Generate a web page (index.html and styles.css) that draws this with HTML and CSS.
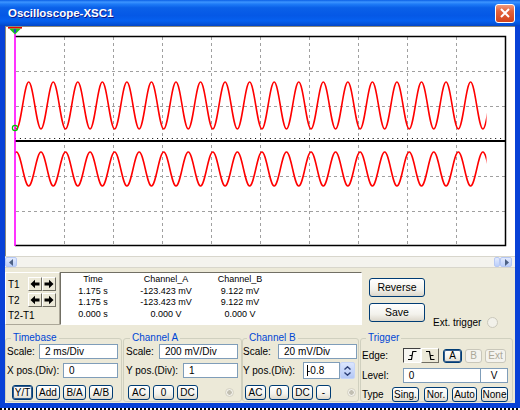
FILE: index.html
```html
<!DOCTYPE html>
<html lang="en">

<head>
    <meta charset="UTF-8">
    <title>Oscilloscope-XSC1</title>
    <link rel="stylesheet" href="styles.css">
</head>

<body>
    <div class="window">
        <div class="titlebar">
            <span class="title">Oscilloscope-XSC1</span>
            <button class="close">
                <svg width="10" height="10" viewBox="0 0 10 10"><path d="M1 1L9 9M9 1L1 9" stroke="#fff" stroke-width="2"/></svg>
            </button>
        </div>
        <div class="client">
            <div class="screen">
                <svg width="509" height="229" viewBox="0 0 509 229">
                    <defs>
                        <clipPath id="clip"><rect x="9" y="0" width="471.5" height="229"/></clipPath>
                    </defs>
                    <!-- grid -->
                    <g stroke="#a0a0a0" stroke-width="1" stroke-dasharray="3 3">
                        <path d="M58.5 10V219M107.5 10V219M156.5 10V219M205.5 10V219M254.5 10V219M303.5 10V219M352.5 10V219M401.5 10V219M450.5 10V219"/>
                        <path d="M10 44.5H500M10 79.5H500M10 149.5H500M10 184.5H500"/>
                    </g>
                    <line x1="9" y1="114" x2="500" y2="114" stroke="#000" stroke-width="2"/>
                    <line x1="9" y1="111.5" x2="500" y2="111.5" stroke="#000" stroke-width="1" stroke-dasharray="1 3.9"/>
                    <path d="M9 9.5H499.5V218.5H9" fill="none" stroke="#000" stroke-width="1.5"/>
                    <!-- channel A / B -->
                    <g clip-path="url(#clip)" fill="none" stroke="#f00" stroke-width="1.6">
                        <path d="M-1.85 55c4.47 0 7.805 47 12.275 47s7.805 -47 12.275 -47s7.805 47 12.275 47s7.805 -47 12.275 -47s7.805 47 12.275 47s7.805 -47 12.275 -47s7.805 47 12.275 47s7.805 -47 12.275 -47s7.805 47 12.275 47s7.805 -47 12.275 -47s7.805 47 12.275 47s7.805 -47 12.275 -47s7.805 47 12.275 47s7.805 -47 12.275 -47s7.805 47 12.275 47s7.805 -47 12.275 -47s7.805 47 12.275 47s7.805 -47 12.275 -47s7.805 47 12.275 47s7.805 -47 12.275 -47s7.805 47 12.275 47s7.805 -47 12.275 -47s7.805 47 12.275 47s7.805 -47 12.275 -47s7.805 47 12.275 47s7.805 -47 12.275 -47s7.805 47 12.275 47s7.805 -47 12.275 -47s7.805 47 12.275 47s7.805 -47 12.275 -47s7.805 47 12.275 47s7.805 -47 12.275 -47s7.805 47 12.275 47s7.805 -47 12.275 -47s7.805 47 12.275 47s7.805 -47 12.275 -47s7.805 47 12.275 47s7.805 -47 12.275 -47s7.805 47 12.275 47s7.805 -47 12.275 -47s7.805 47 12.275 47"/>
                        <path d="M-1.85 159c4.47 0 7.805 -34 12.275 -34s7.805 34 12.275 34s7.805 -34 12.275 -34s7.805 34 12.275 34s7.805 -34 12.275 -34s7.805 34 12.275 34s7.805 -34 12.275 -34s7.805 34 12.275 34s7.805 -34 12.275 -34s7.805 34 12.275 34s7.805 -34 12.275 -34s7.805 34 12.275 34s7.805 -34 12.275 -34s7.805 34 12.275 34s7.805 -34 12.275 -34s7.805 34 12.275 34s7.805 -34 12.275 -34s7.805 34 12.275 34s7.805 -34 12.275 -34s7.805 34 12.275 34s7.805 -34 12.275 -34s7.805 34 12.275 34s7.805 -34 12.275 -34s7.805 34 12.275 34s7.805 -34 12.275 -34s7.805 34 12.275 34s7.805 -34 12.275 -34s7.805 34 12.275 34s7.805 -34 12.275 -34s7.805 34 12.275 34s7.805 -34 12.275 -34s7.805 34 12.275 34s7.805 -34 12.275 -34s7.805 34 12.275 34s7.805 -34 12.275 -34s7.805 34 12.275 34s7.805 -34 12.275 -34s7.805 34 12.275 34s7.805 -34 12.275 -34s7.805 34 12.275 34s7.805 -34 12.275 -34"/>
                    </g>
                    <!-- cursors -->
                    <line x1="9" y1="7" x2="9" y2="219" stroke="#f0f" stroke-width="1.6"/>
                    <rect x="2" y="0" width="14" height="1.6" fill="#e00"/>
                    <polygon points="3,1.6 15,1.6 9,7.5" fill="#1fc21f"/>
                    <rect x="8" y="2" width="2" height="3.5" fill="#2a3fd0"/>
                    <circle cx="9" cy="101" r="2.6" fill="none" stroke="#00c000" stroke-width="1.2"/>
                </svg>
            </div>

            <div class="hscroll">
                <span class="sbtn"><svg width="5" height="7" viewBox="0 0 5 7"><path d="M4 0V7L0 3.5Z" fill="#4d6185"/></svg></span>
                <span class="track"></span>
                <span class="thumb"></span>
                <span class="sbtn"><svg width="5" height="7" viewBox="0 0 5 7"><path d="M1 0V7L5 3.5Z" fill="#4d6185"/></svg></span>
            </div>

            <div class="cursors">
                <div class="tbox">
                    <div class="trow">
                        <span class="tlabel">T1</span>
                        <button class="abtn"><svg width="10" height="10" viewBox="0 0 10 10"><path d="M0.5 5L5 0.8V3.5H9.5V6.5H5V9.2Z"/></svg></button>
                        <button class="abtn"><svg width="10" height="10" viewBox="0 0 10 10"><path d="M9.5 5L5 0.8V3.5H0.5V6.5H5V9.2Z"/></svg></button>
                    </div>
                    <div class="trow">
                        <span class="tlabel">T2</span>
                        <button class="abtn"><svg width="10" height="10" viewBox="0 0 10 10"><path d="M0.5 5L5 0.8V3.5H9.5V6.5H5V9.2Z"/></svg></button>
                        <button class="abtn"><svg width="10" height="10" viewBox="0 0 10 10"><path d="M9.5 5L5 0.8V3.5H0.5V6.5H5V9.2Z"/></svg></button>
                    </div>
                    <div class="tdiff">T2-T1</div>
                </div>
                <div class="readout">
                    <span>Time</span><span>Channel_A</span><span>Channel_B</span>
                    <span>1.175 s</span><span>-123.423 mV</span><span>9.122 mV</span>
                    <span>1.175 s</span><span>-123.423 mV</span><span>9.122 mV</span>
                    <span>0.000 s</span><span>0.000 V</span><span>0.000 V</span>
                </div>
                <div class="side">
                    <div class="sbtns">
                        <button class="btn wide">Reverse</button>
                        <button class="btn wide">Save</button>
                    </div>
                    <div class="ext">
                        <span>Ext. trigger</span>
                        <span class="radio"></span>
                    </div>
                </div>
            </div>

            <div class="groups">
                <fieldset class="group timebase">
                    <legend>Timebase</legend>
                    <div class="row">
                        <span>Scale:</span>
                        <div class="field scale">2 ms/Div</div>
                    </div>
                    <div class="row r2">
                        <span>X pos.(Div):</span>
                        <div class="field pos">0</div>
                    </div>
                    <div class="btns tb-btns">
                        <button class="btn on">Y/T</button>
                        <button class="btn">Add</button>
                        <button class="btn">B/A</button>
                        <button class="btn">A/B</button>
                    </div>
                </fieldset>

                <fieldset class="group cha">
                    <legend>Channel A</legend>
                    <div class="row">
                        <span>Scale:</span>
                        <div class="field scale">200 mV/Div</div>
                    </div>
                    <div class="row r2">
                        <span>Y pos.(Div):</span>
                        <div class="field pos">1</div>
                    </div>
                    <div class="btns ch-btns">
                        <button class="btn w22">AC</button>
                        <button class="btn w21">0</button>
                        <button class="btn w21">DC</button>
                        <span class="dot"></span>
                    </div>
                </fieldset>

                <fieldset class="group chb">
                    <legend>Channel B</legend>
                    <div class="row">
                        <span>Scale:</span>
                        <div class="field scale">20 mV/Div</div>
                    </div>
                    <div class="row r2">
                        <span>Y pos.(Div):</span>
                        <div class="spinbox">
                            <div class="field short"><span class="caret"></span>-0.8</div>
                            <span class="spin">
                                <svg width="7" height="4" viewBox="0 0 7 4"><path d="M0.5 3.5L3.5 0.8L6.5 3.5" fill="none" stroke="#2c3f76" stroke-width="1.4"/></svg>
                                <svg width="7" height="4" viewBox="0 0 7 4"><path d="M0.5 0.5L3.5 3.2L6.5 0.5" fill="none" stroke="#2c3f76" stroke-width="1.4"/></svg>
                            </span>
                        </div>
                    </div>
                    <div class="btns ch-btns">
                        <button class="btn w21">AC</button>
                        <button class="btn w20">0</button>
                        <button class="btn w21">DC</button>
                        <button class="btn w15">-</button>
                        <span class="dot"></span>
                    </div>
                </fieldset>

                <fieldset class="group trig">
                    <legend>Trigger</legend>
                    <div class="trow1">
                        <span class="lab-edge">Edge:</span>
                        <button class="edge on"><svg width="11" height="11" viewBox="0 0 11 11"><path d="M1 9.5H4.5L5.8 1.5H9.5M2.5 5.5H5.3" fill="none" stroke="#000" stroke-width="1.2"/></svg></button>
                        <button class="edge"><svg width="11" height="11" viewBox="0 0 11 11"><path d="M1 1.5H4.5L5.8 9.5H9.5M5.6 5.5H8.5" fill="none" stroke="#000" stroke-width="1.2"/></svg></button>
                        <button class="btn small on a-btn">A</button>
                        <button class="btn small off b-btn">B</button>
                        <button class="btn small off ext-btn">Ext</button>
                    </div>
                    <div class="trow2">
                        <span class="lab-level">Level:</span>
                        <div class="field level">0</div>
                        <div class="field unit">V</div>
                    </div>
                    <div class="trow3">
                        <span class="lab-type">Type</span>
                        <button class="btn w27">Sing.</button>
                        <button class="btn w24 g5">Nor.</button>
                        <button class="btn w25 g4">Auto</button>
                        <button class="btn w27 g4">None</button>
                    </div>
                </fieldset>
            </div>
        </div>
    </div>
</body>

</html>
```

FILE: styles.css
```css
html, body {
    margin: 0;
}

body {
    width: 520px;
    height: 410px;
    overflow: hidden;
    background: repeating-linear-gradient(90deg, #000 0 2px, #fff 2px 4px);
    font-family: "Liberation Sans", Arial, sans-serif;
    font-size: 10px;
    color: #000;
}

button {
    font-family: inherit;
    font-size: 10px;
    color: #000;
    padding: 0;
    margin: 0;
    cursor: default;
}

.window {
    height: 408px;
    box-sizing: border-box;
    padding: 0 5px 5px;
    background: #0841d7;
    display: flex;
    flex-direction: column;
}

/* title bar */
.titlebar {
    margin: 0 -5px;
    height: 26px;
    flex: none;
    display: flex;
    align-items: center;
    justify-content: space-between;
    padding: 0 5px 0 8px;
    background: linear-gradient(180deg, #0a5fe5 0%, #3d95ff 8%, #1e7bf7 16%, #0a60e8 30%, #0558e6 60%, #0660ef 80%, #0453da 92%, #0345c8 100%);
}

.title {
    color: #fff;
    font-weight: bold;
    font-size: 11.5px;
    text-shadow: 1px 1px #0f1a89;
}

.close {
    width: 20px;
    height: 19px;
    box-sizing: border-box;
    border: 1px solid #fff;
    border-radius: 3px;
    background: linear-gradient(180deg, #f09a7c 0%, #e3643e 35%, #d2431c 100%);
    display: flex;
    align-items: center;
    justify-content: center;
}

.client {
    flex: 1;
    background: #ece9d8;
    display: flex;
    flex-direction: column;
}

/* scope screen */
.screen {
    height: 230px;
    box-sizing: border-box;
    background: #fff;
    border-top: 1px solid #8c8a7c;
    border-left: 1px solid #8c8a7c;
}

.screen svg {
    display: block;
}

.hscroll {
    height: 12px;
    box-sizing: border-box;
    display: flex;
    align-items: center;
    background: #f4f3ee;
    border-top: 1px solid #d8d6cc;
    border-bottom: 1px solid #d8d6cc;
    padding-right: 3px;
}

.track {
    flex: 1;
}

.sbtn, .thumb {
    height: 10px;
    box-sizing: border-box;
    border: 1px solid #b6c8f4;
    border-radius: 2px;
    background: linear-gradient(180deg, #e2eafe, #bccffa);
    display: flex;
    align-items: center;
    justify-content: center;
}

.sbtn {
    width: 12px;
}

.thumb {
    width: 6px;
}

/* cursor readout */
.cursors {
    height: 64px;
    flex: none;
    display: flex;
}

.tbox {
    width: 55px;
    height: 53px;
    margin-top: 4px;
    box-sizing: border-box;
    border: 1px solid;
    border-color: #fff #aca899 #aca899 #fff;
    padding: 4px 0 0 1px;
}

.trow {
    display: flex;
    align-items: center;
    height: 14px;
    margin-bottom: 2px;
}

.tlabel {
    width: 20px;
    padding-left: 1px;
}

.abtn {
    width: 14px;
    height: 14px;
    box-sizing: border-box;
    border: 1px solid;
    border-color: #fff #716f64 #716f64 #fff;
    background: #ece9d8;
    display: flex;
    align-items: center;
    justify-content: center;
}

.tdiff {
    margin-top: 3px;
    line-height: 12px;
    padding-left: 1px;
}

.readout {
    width: 302px;
    height: 53px;
    margin-top: 4px;
    box-sizing: border-box;
    border: 1px solid;
    border-color: #716f64 #fff #fff #716f64;
    background: #fff;
    padding-top: 1px;
    display: grid;
    grid-template-columns: 64px 82px 66px;
    align-content: start;
    text-align: center;
    font-size: 9px;
    line-height: 11.6px;
}

.side {
    display: flex;
    margin-left: 7px;
}

.sbtns {
    display: flex;
    flex-direction: column;
    gap: 6px;
    margin-top: 10px;
}

.btn {
    height: 15px;
    box-sizing: border-box;
    border: 1px solid #003c74;
    border-radius: 3px;
    background: linear-gradient(180deg, #fff 0%, #f3f2ec 60%, #dcd7cb 100%);
    line-height: 13px;
    text-align: center;
}

.btn.wide {
    width: 56px;
    height: 19px;
    font-size: 10.5px;
}

.btn.on {
    box-shadow: inset 0 0 0 1px #335c8c;
}

.btn.off {
    color: #aca899;
    border-color: #c9c7ba;
    background: #f4f3ee;
}

.ext {
    display: flex;
    align-items: center;
    gap: 6px;
    margin: 49px 0 0 8px;
    height: 11px;
}

.radio {
    width: 11px;
    height: 11px;
    box-sizing: border-box;
    border-radius: 50%;
    border: 1px solid #cac8bb;
    background: #f2f1ea;
}

/* control groups */
.groups {
    flex: 1;
    display: flex;
}

.group {
    margin: 0;
    height: 70px;
    box-sizing: border-box;
    min-width: 0;
    border: 1px solid #d0d0bf;
    border-radius: 3px;
    padding: 0 3px 1px 1px;
}

.group legend {
    color: #0046d5;
    padding: 0 2px;
    margin-left: 4px;
    line-height: 12px;
}

.timebase {
    width: 117px;
}

.cha {
    width: 119px;
    margin-left: 1px;
    padding-left: 2px;
}

.chb {
    width: 117px;
    padding-left: 0;
    padding-right: 1px;
}

.trig {
    width: 153px;
    margin-left: 1px;
    padding-right: 4px;
}

.row {
    display: flex;
    align-items: center;
    justify-content: space-between;
    height: 15px;
    margin-bottom: 4px;
}

.row.r2 {
    margin-bottom: 7px;
}

.field {
    height: 15px;
    box-sizing: border-box;
    border: 1px solid #7f9db9;
    background: #fff;
    padding-left: 5px;
    line-height: 13px;
    white-space: nowrap;
}

.field.scale {
    width: 79px;
}

.field.pos {
    width: 55px;
}

.spinbox {
    display: flex;
    align-items: center;
    margin-right: 2px;
}

.field.short {
    width: 37px;
    height: 17px;
    line-height: 15px;
    padding-left: 3px;
}

.caret {
    display: inline-block;
    width: 1px;
    height: 11px;
    background: #000;
    vertical-align: -2px;
    margin-right: -1px;
}

.spin {
    width: 15px;
    height: 17px;
    box-sizing: border-box;
    border: 1px solid #c6d4f7;
    border-radius: 2px;
    background: linear-gradient(180deg, #dbe5fd, #b4c8f6);
    display: flex;
    flex-direction: column;
    align-items: center;
    justify-content: center;
    gap: 2px;
}

.spin svg {
    display: block;
}

.btns {
    display: flex;
    align-items: center;
    gap: 3px;
    height: 15px;
}

.tb-btns {
    margin-left: 5px;
}

.tb-btns .btn:nth-child(1) { width: 21px; }
.tb-btns .btn:nth-child(2) { width: 24px; }
.tb-btns .btn:nth-child(3) { width: 23px; }
.tb-btns .btn:nth-child(4) { width: 24px; }

.ch-btns {
    margin-left: 2px;
}

.w15 { width: 15px; }
.w20 { width: 20px; }
.w21 { width: 21px; }
.w22 { width: 22px; }
.w24 { width: 24px; }
.w25 { width: 25px; }
.w27 { width: 27px; }

.g4 { margin-left: 4px; }
.g5 { margin-left: 5px; }

.dot {
    margin-left: auto;
    margin-right: 4px;
    width: 9px;
    height: 9px;
    box-sizing: border-box;
    border-radius: 50%;
    border: 1px solid #d5d2c4;
    background: radial-gradient(circle, #c2bfb2 0 2px, #f2f1ea 2.5px);
}

.chb .dot {
    margin-right: 1px;
}

/* trigger */
.trow1 {
    display: flex;
    align-items: center;
    height: 15px;
    margin-top: 4px;
    margin-bottom: 5px;
}

.lab-edge {
    width: 41px;
}

.edge {
    width: 18px;
    height: 15px;
    box-sizing: border-box;
    border: 1px solid;
    border-color: #fff #716f64 #716f64 #fff;
    background: #ece9d8;
    display: flex;
    align-items: center;
    justify-content: center;
}

.edge.on {
    border-color: #404040 #fff #fff #404040;
    background: #f7f6f1;
}

.btn.small {
    height: 14px;
    line-height: 12px;
}

.a-btn {
    width: 19px;
    margin-left: 4px;
}

.b-btn {
    width: 17px;
    margin-left: 3px;
}

.ext-btn {
    width: 21px;
    margin-left: 3px;
}

.trow2 {
    display: flex;
    align-items: center;
    height: 15px;
    margin-bottom: 4px;
}

.lab-level {
    width: 41px;
}

.field.level {
    width: 79px;
}

.field.unit {
    width: 27px;
    border-left: none;
    padding: 0;
    text-align: center;
}

.trow3 {
    display: flex;
    align-items: center;
    height: 15px;
}

.lab-type {
    width: 30px;
}
```
